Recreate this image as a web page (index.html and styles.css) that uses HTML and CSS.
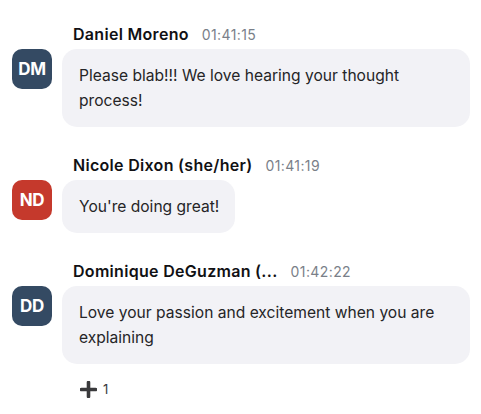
FILE: index.html
```html
<!DOCTYPE html>
<html>
<head>
<meta charset="utf-8">
<link rel="stylesheet" href="styles.css">
</head>
<body>
<div class="chat">
  <div class="msg">
    <div class="head"><span class="name">Daniel Moreno</span><span class="time">01:41:15</span></div>
    <div class="row">
      <div class="avatar slate">DM</div>
      <div class="bubble">Please blab!!! We love hearing your thought process!</div>
    </div>
  </div>
  <div class="msg">
    <div class="head"><span class="name">Nicole Dixon (she/her)</span><span class="time">01:41:19</span></div>
    <div class="row">
      <div class="avatar red">ND</div>
      <div class="bubble">You're doing great!</div>
    </div>
  </div>
  <div class="msg">
    <div class="head"><span class="name" title="Dominique DeGuzman (she/her)">Dominique DeGuzman (...</span><span class="time">01:42:22</span></div>
    <div class="row">
      <div class="avatar slate">DD</div>
      <div class="bubble">Love your passion and excitement when you are explaining</div>
    </div>
    <div class="reactions">
      <span class="reaction">
        <svg width="17" height="17" viewBox="0 0 17 17"><path d="M8.5 1.5v14M1.5 8.5h14" stroke="#3a3a3c" stroke-width="3.6" stroke-linecap="round"/></svg>
        <span class="count">1</span>
      </span>
    </div>
  </div>
</div>
</body>
</html>
```
FILE: styles.css
```css
* { box-sizing: border-box; }
body {
  margin: 0;
  background: #ffffff;
  font-family: Inter, "Noto Sans", sans-serif;
  color: #1f1f22;
}
.chat {
  padding: 24px 11px 0 12px;
  display: flex;
  flex-direction: column;
  gap: 28px;
}
.msg {
  display: flex;
  flex-direction: column;
}
.head {
  display: flex;
  align-items: baseline;
  gap: 13px;
  padding-left: 61px;
  height: 20px;
  line-height: 20px;
  margin-bottom: 5px;
}
.name {
  font-size: 16px;
  font-weight: 600;
  letter-spacing: 0.3px;
  color: #111114;
  white-space: nowrap;
}
.time {
  font-size: 14px;
  letter-spacing: 0.4px;
  color: #7a7f89;
}
.row {
  display: flex;
  align-items: flex-start;
  gap: 10px;
}
.avatar {
  flex: none;
  width: 40px;
  height: 40px;
  border-radius: 10px;
  color: #fff;
  font-weight: 700;
  font-size: 17px;
  display: flex;
  align-items: center;
  justify-content: center;
  letter-spacing: -0.3px;
}
.slate { background: #344a63; }
.red { background: #c5392c; }
.bubble {
  background: #f2f2f6;
  border-radius: 15px;
  padding: 14px 16px 14px 17px;
  font-size: 15.6px;
  line-height: 25px;
  color: #252527;
  max-width: 408px;
}
.reactions {
  padding-left: 68px;
  margin-top: 15px;
  display: flex;
}
.reaction {
  display: inline-flex;
  align-items: center;
  gap: 6px;
  height: 20px;
}
.count {
  font-size: 13px;
  color: #3a3a3c;
}
```
